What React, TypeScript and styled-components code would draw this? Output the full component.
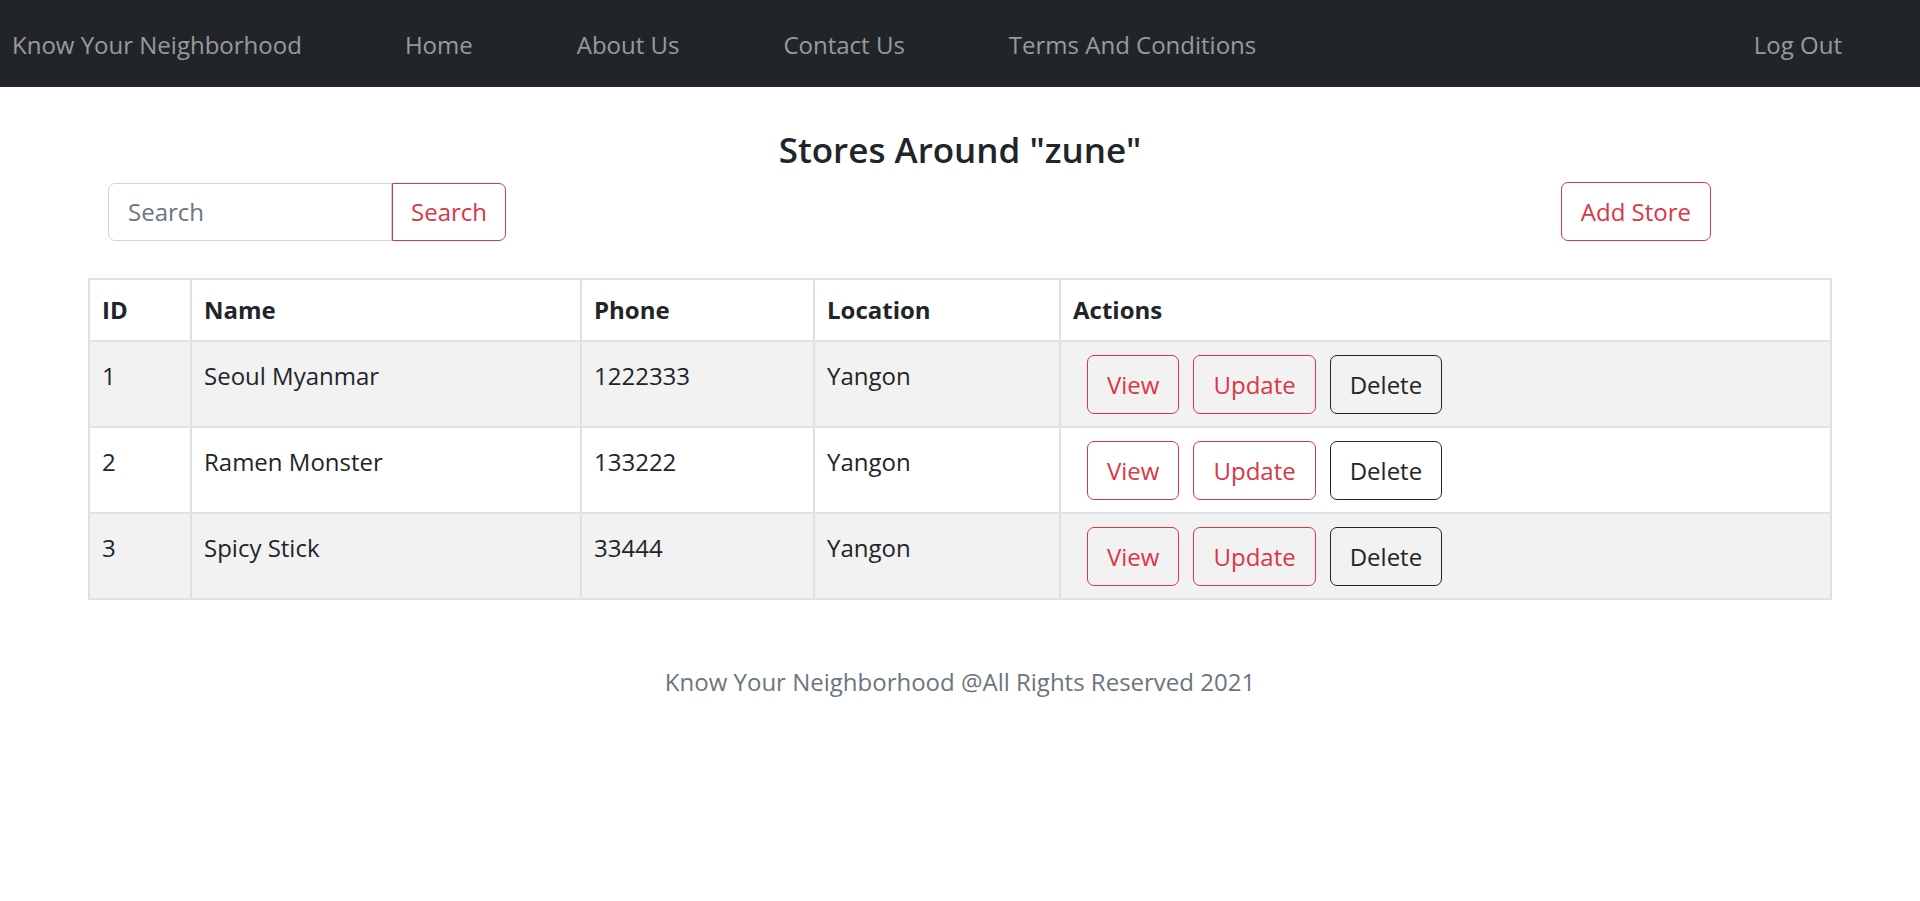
import React from 'react'
import styled, { createGlobalStyle } from 'styled-components'

const GlobalStyle = createGlobalStyle`
  html, body {
    margin: 0;
    padding: 0;
    background: #fff;
  }
  body {
    font-family: "Open Sans", "Noto Sans", sans-serif;
    font-size: 24px;
    line-height: 36px;
    color: #212529;
  }
  * {
    box-sizing: border-box;
  }
`

const red = '#dc3545'
const dark = '#212529'

const Navbar = styled.nav`
  height: 87px;
  background: ${dark};
  display: flex;
  align-items: center;
  padding: 2px 26px 0 12px;
`

const Brand = styled.a`
  color: rgba(255, 255, 255, 0.55);
  font-size: 24px;
  margin-right: 51px;
  white-space: nowrap;
`

const NavLink = styled.a<{ $push?: boolean }>`
  color: rgba(255, 255, 255, 0.55);
  font-size: 24px;
  padding: 0 52px;
  white-space: nowrap;
  margin-left: ${({ $push }) => ($push ? 'auto' : '0')};
`

const Main = styled.main`
  padding: 0 88px;
`

const Title = styled.h3`
  margin: 41px 0 11px;
  text-align: center;
  font-size: 35px;
  line-height: 43px;
  font-weight: 600;
`

const Toolbar = styled.div`
  display: flex;
  justify-content: space-between;
  align-items: center;
  padding: 0 121px 0 20px;
  margin-bottom: 37px;
`

const SearchGroup = styled.form`
  display: flex;
`

const SearchInput = styled.input`
  width: 284px;
  height: 58px;
  padding: 0 19px;
  border: 1px solid #ced4da;
  border-radius: 7px 0 0 7px;
  font-family: inherit;
  font-size: 24px;
  color: ${dark};
  outline: none;

  &::placeholder {
    color: #6c757d;
  }
`

const Button = styled.button<{ $tone?: 'red' | 'dark'; $joined?: boolean }>`
  height: ${({ $joined }) => ($joined ? '58px' : '59px')};
  padding: ${({ $joined }) => ($joined ? '0 18px' : '0 19px')};
  background: transparent;
  border: 1px solid ${({ $tone }) => ($tone === 'dark' ? dark : red)};
  color: ${({ $tone }) => ($tone === 'dark' ? dark : red)};
  border-radius: ${({ $joined }) => ($joined ? '0 7px 7px 0' : '7px')};
  font-family: inherit;
  font-size: 24px;
  line-height: 36px;
  cursor: pointer;
  white-space: nowrap;
`

const Table = styled.table`
  width: 100%;
  border-collapse: collapse;
  border: 2px solid #dee2e6;
`

const Th = styled.th<{ $w?: number }>`
  width: ${({ $w }) => ($w ? `${$w}px` : 'auto')};
  text-align: left;
  font-weight: 700;
  padding: 12px;
  border: 2px solid #dee2e6;
  vertical-align: top;
`

const Row = styled.tr<{ $striped?: boolean }>`
  background: ${({ $striped }) => ($striped ? '#f2f2f2' : '#fff')};
`

const Td = styled.td<{ $actions?: boolean }>`
  padding: ${({ $actions }) => ($actions ? '13px 12px 12px' : '16px 12px 12px')};
  border: 2px solid #dee2e6;
  vertical-align: top;
`

const Actions = styled.div`
  display: flex;
  gap: 14px;
  padding-left: 14px;
`

const Footer = styled.footer`
  margin-top: 64px;
  text-align: center;
  color: #6c757d;
  font-size: 24px;
`

const stores = [
  { id: 1, name: 'Seoul Myanmar', phone: '1222333', location: 'Yangon' },
  { id: 2, name: 'Ramen Monster', phone: '133222', location: 'Yangon' },
  { id: 3, name: 'Spicy Stick', phone: '33444', location: 'Yangon' },
]

const App = () => (
  <>
    <GlobalStyle />
    <Navbar>
      <Brand>Know Your Neighborhood</Brand>
      <NavLink>Home</NavLink>
      <NavLink>About Us</NavLink>
      <NavLink>Contact Us</NavLink>
      <NavLink>Terms And Conditions</NavLink>
      <NavLink $push>Log Out</NavLink>
    </Navbar>
    <Main>
      <Title>Stores Around "zune"</Title>
      <Toolbar>
        <SearchGroup onSubmit={e => e.preventDefault()}>
          <SearchInput placeholder="Search" />
          <Button $joined>Search</Button>
        </SearchGroup>
        <Button>Add Store</Button>
      </Toolbar>
      <Table>
        <thead>
          <tr>
            <Th $w={102}>ID</Th>
            <Th $w={390}>Name</Th>
            <Th $w={233}>Phone</Th>
            <Th $w={246}>Location</Th>
            <Th>Actions</Th>
          </tr>
        </thead>
        <tbody>
          {stores.map((s, i) => (
            <Row key={s.id} $striped={i % 2 === 0}>
              <Td>{s.id}</Td>
              <Td>{s.name}</Td>
              <Td>{s.phone}</Td>
              <Td>{s.location}</Td>
              <Td $actions>
                <Actions>
                  <Button>View</Button>
                  <Button>Update</Button>
                  <Button $tone="dark">Delete</Button>
                </Actions>
              </Td>
            </Row>
          ))}
        </tbody>
      </Table>
      <Footer>Know Your Neighborhood @All Rights Reserved 2021</Footer>
    </Main>
  </>
)

export default App
